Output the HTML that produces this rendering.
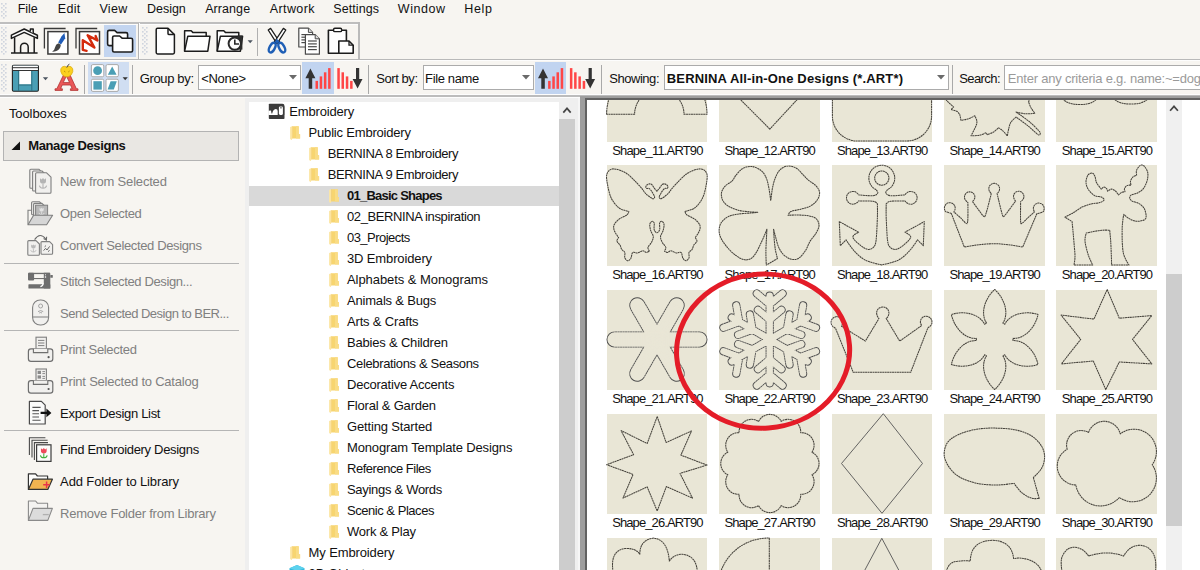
<!DOCTYPE html>
<html lang="en"><head><meta charset="utf-8"><title>BERNINA Embroidery Library</title>
<style>
html,body{margin:0;padding:0;}
body{width:1200px;height:570px;overflow:hidden;position:relative;background:#f7f5f1;font-family:"Liberation Sans",sans-serif;}
.t{position:absolute;white-space:pre;line-height:16px;}
.r{position:absolute;display:block;}
</style></head><body>
<span class="t" style="left:17.7px;top:1.37px;font-size:12.5px;letter-spacing:-0.014px;color:#111;">File</span>
<span class="t" style="left:57.8px;top:1.37px;font-size:12.5px;letter-spacing:0.287px;color:#111;">Edit</span>
<span class="t" style="left:99.4px;top:1.37px;font-size:12.5px;letter-spacing:0.344px;color:#111;">View</span>
<span class="t" style="left:147.1px;top:1.37px;font-size:12.5px;letter-spacing:-0.042px;color:#111;">Design</span>
<span class="t" style="left:205.2px;top:1.37px;font-size:12.5px;letter-spacing:0.071px;color:#111;">Arrange</span>
<span class="t" style="left:269.8px;top:1.37px;font-size:12.5px;letter-spacing:0.389px;color:#111;">Artwork</span>
<span class="t" style="left:333.3px;top:1.37px;font-size:12.5px;letter-spacing:0.076px;color:#111;">Settings</span>
<span class="t" style="left:397.8px;top:1.37px;font-size:12.5px;letter-spacing:0.548px;color:#111;">Window</span>
<span class="t" style="left:464.3px;top:1.37px;font-size:12.5px;letter-spacing:0.664px;color:#111;">Help</span>
<svg class="r" style="left:1px;top:3px;" width="6" height="16" viewBox="0 0 6 16"><g fill="#cfd5de"><rect x="0" y="0" width="1.6" height="1.6"/><rect x="4" y="0" width="1.6" height="1.6"/><rect x="2" y="2" width="1.6" height="1.6"/><rect x="0" y="4" width="1.6" height="1.6"/><rect x="4" y="4" width="1.6" height="1.6"/><rect x="2" y="6" width="1.6" height="1.6"/><rect x="0" y="8" width="1.6" height="1.6"/><rect x="4" y="8" width="1.6" height="1.6"/><rect x="2" y="10" width="1.6" height="1.6"/><rect x="0" y="12" width="1.6" height="1.6"/><rect x="4" y="12" width="1.6" height="1.6"/><rect x="2" y="14" width="1.6" height="1.6"/></g></svg>
<div class="r" style="left:0px;top:22px;width:359.5px;height:1.5px;background:#bebebe;"></div>
<div class="r" style="left:0px;top:23.5px;width:359px;height:1px;background:#fdfdfd;"></div>
<div class="r" style="left:137.5px;top:23px;width:1.5px;height:36px;background:#b4b4b4;"></div>
<div class="r" style="left:139px;top:23px;width:1px;height:36px;background:#fdfdfd;"></div>
<div class="r" style="left:358px;top:22px;width:1.5px;height:37px;background:#bababa;"></div>
<div class="r" style="left:0px;top:58.6px;width:1200px;height:1.6px;background:#b9b9b9;"></div>
<div class="r" style="left:0px;top:60.2px;width:1200px;height:1.2px;background:#fdfdfd;"></div>
<svg class="r" style="left:1px;top:27px;" width="6" height="28" viewBox="0 0 6 28"><g fill="#cfd5de"><rect x="0" y="0" width="1.6" height="1.6"/><rect x="4" y="0" width="1.6" height="1.6"/><rect x="2" y="2" width="1.6" height="1.6"/><rect x="0" y="4" width="1.6" height="1.6"/><rect x="4" y="4" width="1.6" height="1.6"/><rect x="2" y="6" width="1.6" height="1.6"/><rect x="0" y="8" width="1.6" height="1.6"/><rect x="4" y="8" width="1.6" height="1.6"/><rect x="2" y="10" width="1.6" height="1.6"/><rect x="0" y="12" width="1.6" height="1.6"/><rect x="4" y="12" width="1.6" height="1.6"/><rect x="2" y="14" width="1.6" height="1.6"/><rect x="0" y="16" width="1.6" height="1.6"/><rect x="4" y="16" width="1.6" height="1.6"/><rect x="2" y="18" width="1.6" height="1.6"/><rect x="0" y="20" width="1.6" height="1.6"/><rect x="4" y="20" width="1.6" height="1.6"/><rect x="2" y="22" width="1.6" height="1.6"/><rect x="0" y="24" width="1.6" height="1.6"/><rect x="4" y="24" width="1.6" height="1.6"/><rect x="2" y="26" width="1.6" height="1.6"/></g></svg>
<svg class="r" style="left:142px;top:27px;" width="6" height="28" viewBox="0 0 6 28"><g fill="#cfd5de"><rect x="0" y="0" width="1.6" height="1.6"/><rect x="4" y="0" width="1.6" height="1.6"/><rect x="2" y="2" width="1.6" height="1.6"/><rect x="0" y="4" width="1.6" height="1.6"/><rect x="4" y="4" width="1.6" height="1.6"/><rect x="2" y="6" width="1.6" height="1.6"/><rect x="0" y="8" width="1.6" height="1.6"/><rect x="4" y="8" width="1.6" height="1.6"/><rect x="2" y="10" width="1.6" height="1.6"/><rect x="0" y="12" width="1.6" height="1.6"/><rect x="4" y="12" width="1.6" height="1.6"/><rect x="2" y="14" width="1.6" height="1.6"/><rect x="0" y="16" width="1.6" height="1.6"/><rect x="4" y="16" width="1.6" height="1.6"/><rect x="2" y="18" width="1.6" height="1.6"/><rect x="0" y="20" width="1.6" height="1.6"/><rect x="4" y="20" width="1.6" height="1.6"/><rect x="2" y="22" width="1.6" height="1.6"/><rect x="0" y="24" width="1.6" height="1.6"/><rect x="4" y="24" width="1.6" height="1.6"/><rect x="2" y="26" width="1.6" height="1.6"/></g></svg>
<svg class="r" style="left:1px;top:64px;" width="6" height="28" viewBox="0 0 6 28"><g fill="#cfd5de"><rect x="0" y="0" width="1.6" height="1.6"/><rect x="4" y="0" width="1.6" height="1.6"/><rect x="2" y="2" width="1.6" height="1.6"/><rect x="0" y="4" width="1.6" height="1.6"/><rect x="4" y="4" width="1.6" height="1.6"/><rect x="2" y="6" width="1.6" height="1.6"/><rect x="0" y="8" width="1.6" height="1.6"/><rect x="4" y="8" width="1.6" height="1.6"/><rect x="2" y="10" width="1.6" height="1.6"/><rect x="0" y="12" width="1.6" height="1.6"/><rect x="4" y="12" width="1.6" height="1.6"/><rect x="2" y="14" width="1.6" height="1.6"/><rect x="0" y="16" width="1.6" height="1.6"/><rect x="4" y="16" width="1.6" height="1.6"/><rect x="2" y="18" width="1.6" height="1.6"/><rect x="0" y="20" width="1.6" height="1.6"/><rect x="4" y="20" width="1.6" height="1.6"/><rect x="2" y="22" width="1.6" height="1.6"/><rect x="0" y="24" width="1.6" height="1.6"/><rect x="4" y="24" width="1.6" height="1.6"/><rect x="2" y="26" width="1.6" height="1.6"/></g></svg>
<div class="r" style="left:104px;top:25.3px;width:32px;height:31.5px;background:#c3d5f0;"></div>
<div class="r" style="left:256.6px;top:28px;width:1.2px;height:28px;background:#b0b0b0;"></div>
<div class="r" style="left:88px;top:62.2px;width:41px;height:31.7px;background:#d0def2;"></div>
<div class="r" style="left:302px;top:62.2px;width:32px;height:31.7px;background:#c1d4f0;"></div>
<div class="r" style="left:535px;top:62.2px;width:31.4px;height:31.7px;background:#c1d4f0;"></div>
<div class="r" style="left:84px;top:65px;width:1.3px;height:28.6px;background:#a9a9a9;"></div>
<div class="r" style="left:131.7px;top:65px;width:1.3px;height:28.6px;background:#a9a9a9;"></div>
<div class="r" style="left:368px;top:65px;width:1.3px;height:28.6px;background:#a9a9a9;"></div>
<div class="r" style="left:601px;top:65px;width:1.3px;height:28.6px;background:#a9a9a9;"></div>
<div class="r" style="left:952px;top:65px;width:1.3px;height:28.6px;background:#a9a9a9;"></div>
<span class="t" style="left:139.7px;top:70.50px;font-size:13px;letter-spacing:-0.348px;color:#111;">Group by:</span>
<span class="t" style="left:376.3px;top:70.50px;font-size:13px;letter-spacing:-0.442px;color:#111;">Sort by:</span>
<span class="t" style="left:609.3px;top:70.50px;font-size:13px;letter-spacing:-0.469px;color:#111;">Showing:</span>
<span class="t" style="left:959.3px;top:70.50px;font-size:13px;letter-spacing:-0.601px;color:#111;">Search:</span>
<div class="r" style="left:198.3px;top:65.3px;width:101.0px;height:22.6px;background:#fff;border:1px solid #ababab;"></div>
<span class="t" style="left:201.2px;top:70.50px;font-size:13px;letter-spacing:-0.273px;color:#111;">&lt;None&gt;</span>
<svg class="r" style="left:289.3px;top:74.6px;" width="8" height="5" viewBox="0 0 8 5"><path d="M0 0H8L4 4.6Z" fill="#6a6a6a"/></svg>
<div class="r" style="left:423px;top:65.3px;width:109px;height:22.6px;background:#fff;border:1px solid #ababab;"></div>
<span class="t" style="left:425.1px;top:70.50px;font-size:13px;letter-spacing:-0.360px;color:#111;">File name</span>
<svg class="r" style="left:522px;top:74.6px;" width="8" height="5" viewBox="0 0 8 5"><path d="M0 0H8L4 4.6Z" fill="#6a6a6a"/></svg>
<div class="r" style="left:663.5px;top:65.3px;width:283.0px;height:22.6px;background:#fff;border:1px solid #ababab;"></div>
<span class="t" style="left:666.8px;top:70.50px;font-size:13px;font-weight:700;letter-spacing:0.156px;color:#111;">BERNINA All-in-One Designs (*.ART*)</span>
<svg class="r" style="left:936.5px;top:74.6px;" width="8" height="5" viewBox="0 0 8 5"><path d="M0 0H8L4 4.6Z" fill="#6a6a6a"/></svg>
<div class="r" style="left:1003.5px;top:65.3px;width:200px;height:22.6px;background:#fff;border:1px solid #ababab;"></div>
<span class="t" style="left:1007.8px;top:70.50px;font-size:13px;letter-spacing:-0.211px;color:#9a9a9a;">Enter any criteria e.g. name:~=dog</span>
<div class="r" style="left:0px;top:93.9px;width:1200px;height:1.1px;background:#fdfdfd;"></div>
<div class="r" style="left:0px;top:95px;width:1200px;height:1.8px;background:#bcbcbc;"></div>
<div class="r" style="left:0px;top:96.8px;width:580px;height:1.4px;background:#fdfdfd;"></div>
<svg class="r" style="left:0px;top:0px;" width="620" height="100" viewBox="0 0 620 100"><g fill="none" stroke="#1c1c1c" stroke-width="1.5" stroke-linejoin="round"><path d="M14.6 37.2V53M34.2 37.2V53M11 53H37.6" /><path d="M24.2 29L11.4 35.2V38.4L24.2 32.4L37.4 38.4V35.2Z" fill="#fff"/><path d="M30.4 31.6V29H33.2V33.2" fill="#fff"/><path d="M20.6 53V47A3.8 3.8 0 0 1 28.2 47V53" /></g><path d="M44.4 48.4V28.5H65.6" fill="none" stroke="#3a3a3a" stroke-width="1.3"/><rect x="47.9" y="31.6" width="20" height="22.4" fill="#fff" stroke="#3a3a3a" stroke-width="1.5"/><path d="M64.4 33L65.2 38.2L61 44.4L58.2 42.6L61.4 36.6Z" fill="#1f5cb8"/><path d="M58.4 43.2L60.8 44.8Q60.6 49.4 56.4 51Q54 51.8 52.2 51.6Q54.6 50 55 47.4Q55.6 44 58.4 43.2Z" fill="#444"/><path d="M76.0 48.4V28.5H97.19999999999999" fill="none" stroke="#3a3a3a" stroke-width="1.3"/><rect x="79.5" y="31.6" width="20" height="22.4" fill="#fff" stroke="#3a3a3a" stroke-width="1.5"/><path d="M86.6 50.8L82.8 49.8L82.8 40.2L94.4 47.6L87.6 35.2L97.4 40.4L95.6 36" fill="none" stroke="#d42a0c" stroke-width="2.4" stroke-linejoin="round" stroke-linecap="round"/><path d="M109.1 30.4H114.6L117.1 32.6H126.1Q127.6 32.6 127.6 34.1V44.099999999999994Q127.6 45.599999999999994 126.1 45.599999999999994H109.1Q107.6 45.599999999999994 107.6 44.099999999999994V31.9Q107.6 30.4 109.1 30.4Z" fill="#fff" stroke="#1c1c1c" stroke-width="1.6" stroke-linejoin="round"/><path d="M114.1 36H119.6L122.1 38.2H131.1Q132.6 38.2 132.6 39.7V50.5Q132.6 52 131.1 52H114.1Q112.6 52 112.6 50.5V37.5Q112.6 36 114.1 36Z" fill="#fff" stroke="#1c1c1c" stroke-width="1.6" stroke-linejoin="round"/><path d="M157.6 28.2H168L174.4 34.6V52.6Q174.4 54 173 54H157.6Q156.2 54 156.2 52.6V29.6Q156.2 28.2 157.6 28.2Z" fill="#fff" stroke="#1c1c1c" stroke-width="1.5" stroke-linejoin="round"/><path d="M168 28.2V33.4Q168 34.6 169.2 34.6H174.4" fill="none" stroke="#1c1c1c" stroke-width="1.5"/><path d="M184.6 51.2V30.8H191.2L193.0 32.6H206.2V36" fill="#fff" stroke="#1c1c1c" stroke-width="1.5" stroke-linejoin="round"/><path d="M184.6 51.2L187.79999999999998 36.2H210.0L207.79999999999998 51.2Z" fill="#fff" stroke="#1c1c1c" stroke-width="1.5" stroke-linejoin="round"/><path d="M217.2 51.2V30.8H223.79999999999998L225.6 32.6H238.79999999999998V36" fill="#fff" stroke="#1c1c1c" stroke-width="1.5" stroke-linejoin="round"/><path d="M217.2 51.2L220.39999999999998 36.2H242.6L240.39999999999998 51.2Z" fill="#fff" stroke="#1c1c1c" stroke-width="1.5" stroke-linejoin="round"/><path d="M237.6 35.6H242.4V49.6H237.6Z" fill="#2e2e2e"/><circle cx="234.8" cy="43.6" r="6.2" fill="#fff" stroke="#2a2a2a" stroke-width="2"/><path d="M234.8 39.6V44H239" fill="none" stroke="#2a2a2a" stroke-width="1.6"/><path d="M247.6 40.3H252.8L250.2 43.2Z" fill="#4c5560"/><g stroke-linejoin="round"><path d="M268.2 30L270.6 28.4L279.6 42L276.6 43.2Z" fill="#fff" stroke="#1c1c1c" stroke-width="1.3"/><path d="M285.8 30L283.4 28.4L274.4 42L277.4 43.2Z" fill="#fff" stroke="#1c1c1c" stroke-width="1.3"/><ellipse cx="272.2" cy="47.6" rx="2.6" ry="5.2" transform="rotate(28 272.2 47.6)" fill="none" stroke="#1f5fb6" stroke-width="2.4"/><ellipse cx="281.8" cy="47.6" rx="2.6" ry="5.2" transform="rotate(-28 281.8 47.6)" fill="none" stroke="#1f5fb6" stroke-width="2.4"/><path d="M274.6 41.4L277 38.8L279.4 41.4L277 43.6Z" fill="#1f5fb6"/></g><path d="M298.8 28.2H308.40000000000003L312.6 32.4V47.0H298.8Z" fill="#fff" stroke="#4a4a4a" stroke-width="1.2" stroke-linejoin="round"/><path d="M308.40000000000003 28.2V32.4H312.6" fill="#ddd" stroke="#4a4a4a" stroke-width="1"/><path d="M301.40000000000003 34.6H310.0" stroke="#4a4a4a" stroke-width="1.2"/><path d="M301.40000000000003 37.2H310.0" stroke="#4a4a4a" stroke-width="1.2"/><path d="M301.40000000000003 39.9H310.0" stroke="#4a4a4a" stroke-width="1.2"/><path d="M301.40000000000003 42.6H310.0" stroke="#4a4a4a" stroke-width="1.2"/><path d="M305.4 34.6H315.2L319.4 38.800000000000004V54.2H305.4Z" fill="#fff" stroke="#4a4a4a" stroke-width="1.2" stroke-linejoin="round"/><path d="M315.2 34.6V38.800000000000004H319.4" fill="#ddd" stroke="#4a4a4a" stroke-width="1"/><path d="M308.0 41.0H316.79999999999995" stroke="#4a4a4a" stroke-width="1.2"/><path d="M308.0 43.9H316.79999999999995" stroke="#4a4a4a" stroke-width="1.2"/><path d="M308.0 46.7H316.79999999999995" stroke="#4a4a4a" stroke-width="1.2"/><path d="M308.0 49.6H316.79999999999995" stroke="#4a4a4a" stroke-width="1.2"/><path d="M328.4 30.2H346.4V53.2H328.4Z" fill="#fff" stroke="#1c1c1c" stroke-width="1.6" stroke-linejoin="round"/><rect x="333.6" y="28.2" width="8" height="3.4" rx="1.2" fill="#fff" stroke="#1c1c1c" stroke-width="1.4"/><path d="M338.8 41H349L353.2 45.2V53.2H338.8Z" fill="#fff" stroke="#1c1c1c" stroke-width="1.6" stroke-linejoin="round"/><path d="M349 41V45.2H353.2" fill="none" stroke="#1c1c1c" stroke-width="1.3"/><rect x="12.4" y="65.2" width="26" height="26" rx="1.2" fill="#4a9fb5" stroke="#222" stroke-width="1.1"/><rect x="12.9" y="65.7" width="25" height="4.6" fill="#fff"/><path d="M12.4 67.7H38.4M12.4 70.5H38.4" stroke="#333" stroke-width="1"/><rect x="19.2" y="71" width="12" height="13.4" fill="#fff"/><path d="M18.6 71V91M31.8 71V91M18.6 85H31.8" stroke="#2d6f80" stroke-width="1" fill="none"/><path d="M42.8 77.2H48.2L45.5 80.2Z" fill="#4c5560"/><path d="M55 90.4H62.4V88.8H60.6L62.2 85H70.6L72.2 88.8H70.4V90.4H78V88.8H76.4L69.4 73.6H64.2L56.8 88.8H55Z M63.2 82.6L66.4 76L69.6 82.6Z" fill="#ea5757" stroke="#b03434" stroke-width=".8" fill-rule="evenodd" stroke-linejoin="round"/><path d="M66.8 67.2Q64.6 65.6 62.4 66.8Q60.2 68.4 60.8 71.6Q61.8 75.6 65 76.6Q66.8 77 68.6 76.6Q71.8 75.6 72.8 71.6Q73.4 68.4 71.2 66.8Q69 65.6 66.8 67.2Z" fill="#fbd01f" stroke="#d9a70c" stroke-width=".7"/><path d="M66.8 67.4Q67.2 65.4 69.4 64.2" fill="none" stroke="#333" stroke-width="1"/><path d="M64 71L65.4 72M69.6 71L68.2 72" stroke="#b98a0a" stroke-width=".9"/><rect x="91.4" y="64.6" width="12.4" height="12.2" rx="1.4" fill="#fff" stroke="#a9a9a9" stroke-width="1"/><rect x="106" y="64.6" width="12.4" height="12.2" rx="1.4" fill="#fff" stroke="#a9a9a9" stroke-width="1"/><rect x="91.4" y="79.2" width="12.4" height="12.2" rx="1.4" fill="#fff" stroke="#a9a9a9" stroke-width="1"/><rect x="106" y="79.2" width="12.4" height="12.2" rx="1.4" fill="#fff" stroke="#a9a9a9" stroke-width="1"/><circle cx="97.6" cy="70.7" r="4.4" fill="#4a9fb5"/><path d="M112.2 66.4L116.6 74.8H107.8Z" fill="#4a9fb5"/><rect x="93.4" y="81.2" width="8.4" height="8.4" fill="#4a9fb5"/><path d="M110.6 81.2H116.8L113.8 89.6H107.6Z" fill="#4a9fb5"/><path d="M122.6 77.2H127.8L125.2 80.2Z" fill="#333"/><path d="M308.7 88.8V78.2H305.4L310.4 68.4L315.4 78.2H312.2V88.8Z" fill="#333"/><rect x="315.5" y="80.9" width="2.5" height="7.9" fill="#ff4646"/><rect x="319.7" y="76.4" width="2.5" height="12.4" fill="#ff4646"/><rect x="323.9" y="72.3" width="2.5" height="16.5" fill="#ff4646"/><rect x="328.1" y="68.1" width="2.5" height="20.7" fill="#ff4646"/><rect x="337.3" y="68.1" width="2.5" height="20.7" fill="#ff4646"/><rect x="341.5" y="72.3" width="2.5" height="16.5" fill="#ff4646"/><rect x="345.8" y="76.4" width="2.5" height="12.4" fill="#ff4646"/><rect x="350.1" y="80.9" width="2.5" height="7.9" fill="#ff4646"/><path d="M356 68.1V79H352.6L357.6 88.6L362.5 79H359.2V68.1Z" fill="#333"/><path d="M541.3000000000001 88.8V78.2H538.0L543.0 68.4L548.0 78.2H544.8000000000001V88.8Z" fill="#333"/><rect x="548.1" y="80.9" width="2.5" height="7.9" fill="#ff4646"/><rect x="552.3000000000001" y="76.4" width="2.5" height="12.4" fill="#ff4646"/><rect x="556.5" y="72.3" width="2.5" height="16.5" fill="#ff4646"/><rect x="560.7" y="68.1" width="2.5" height="20.7" fill="#ff4646"/><rect x="569.9" y="68.1" width="2.5" height="20.7" fill="#ff4646"/><rect x="574.1" y="72.3" width="2.5" height="16.5" fill="#ff4646"/><rect x="578.4" y="76.4" width="2.5" height="12.4" fill="#ff4646"/><rect x="582.7" y="80.9" width="2.5" height="7.9" fill="#ff4646"/><path d="M588.6 68.1V79H585.2L590.2 88.6L595.1 79H591.8000000000001V68.1Z" fill="#333"/></svg>
<span class="t" style="left:8.9px;top:105.80px;font-size:13px;letter-spacing:-0.080px;color:#111;">Toolboxes</span>
<div class="r" style="left:3.2px;top:130.8px;width:234px;height:27.8px;background:#e9e7e3;border:1px solid #b3b3b3;"></div>
<svg class="r" style="left:11px;top:140.5px;" width="10" height="10" viewBox="0 0 10 10"><path d="M9 0.5V9H0.5Z" fill="#111"/></svg>
<span class="t" style="left:28.3px;top:137.70px;font-size:13px;font-weight:700;letter-spacing:-0.399px;color:#111;">Manage Designs</span>
<span class="t" style="left:60.1px;top:174.20px;font-size:13px;letter-spacing:-0.189px;color:#808080;">New from Selected</span>
<span class="t" style="left:60.1px;top:206.20px;font-size:13px;letter-spacing:-0.359px;color:#808080;">Open Selected</span>
<span class="t" style="left:60.1px;top:238.20px;font-size:13px;letter-spacing:-0.370px;color:#808080;">Convert Selected Designs</span>
<span class="t" style="left:60.1px;top:274.20px;font-size:13px;letter-spacing:-0.376px;color:#808080;">Stitch Selected Design...</span>
<span class="t" style="left:60.1px;top:306.20px;font-size:13px;letter-spacing:-0.520px;color:#808080;">Send Selected Design to BER...</span>
<span class="t" style="left:60.1px;top:342.20px;font-size:13px;letter-spacing:-0.318px;color:#808080;">Print Selected</span>
<span class="t" style="left:60.1px;top:374.20px;font-size:13px;letter-spacing:-0.217px;color:#808080;">Print Selected to Catalog</span>
<span class="t" style="left:60.1px;top:406.20px;font-size:13px;letter-spacing:-0.300px;color:#111;">Export Design List</span>
<span class="t" style="left:60.1px;top:442.20px;font-size:13px;letter-spacing:-0.311px;color:#111;">Find Embroidery Designs</span>
<span class="t" style="left:60.1px;top:474.20px;font-size:13px;letter-spacing:-0.125px;color:#111;">Add Folder to Library</span>
<span class="t" style="left:60.1px;top:506.20px;font-size:13px;letter-spacing:-0.241px;color:#808080;">Remove Folder from Library</span>
<div class="r" style="left:3.5px;top:262.5px;width:235px;height:1px;background:#b5b5b5;"></div>
<div class="r" style="left:3.5px;top:329.5px;width:235px;height:1px;background:#b5b5b5;"></div>
<div class="r" style="left:3.5px;top:430px;width:235px;height:1px;background:#b5b5b5;"></div>
<svg class="r" style="left:20px;top:160px;" width="40" height="370" viewBox="20 160 40 370"><path d="M30.8 169.2H38.8L42.8 173.2V187.2Q42.8 188.2 41.8 188.2H30.8Q29.8 188.2 29.8 187.2V170.2Q29.8 169.2 30.8 169.2Z" fill="#f1f0ee" stroke="#7f7f7f" stroke-width="1.1" stroke-linejoin="round"/><path d="M33.6 171H42.0L46.0 175V190Q46.0 191 45.0 191H33.6Q32.6 191 32.6 190V172Q32.6 171 33.6 171Z" fill="#f1f0ee" stroke="#7f7f7f" stroke-width="1.1" stroke-linejoin="round"/><path d="M36.6 172.8H46.6L51.0 177.20000000000002V192.20000000000002Q51.0 193.20000000000002 50.0 193.20000000000002H36.6Q35.6 193.20000000000002 35.6 192.20000000000002V173.8Q35.6 172.8 36.6 172.8Z" fill="#f1f0ee" stroke="#7f7f7f" stroke-width="1.1" stroke-linejoin="round"/><g transform="translate(43 183.6) scale(1.0)"><path d="M-3 -5.4L-1.4 -4L0 -5.6L1.4 -4L3 -5.4V-2.4Q3 0 0 0Q-3 0 -3 -2.4Z" fill="#b4b4b4"/><path d="M0 0V4.6M-3.6 2Q-3 4.6 0 4.6Q3 4.6 3.6 2" fill="none" stroke="#b4b4b4" stroke-width="1.1"/></g><path d="M28 224.6V210.2H31.4" fill="none" stroke="#7f7f7f" stroke-width="1.1"/><path d="M32.6 201.8H39.6L42.6 204.8V213.8Q42.6 214.8 41.6 214.8H32.6Q31.6 214.8 31.6 213.8V202.8Q31.6 201.8 32.6 201.8Z" fill="#f1f0ee" stroke="#7f7f7f" stroke-width="1.1" stroke-linejoin="round"/><path d="M34.6 203.4H42.0L45.0 206.4V215.4Q45.0 216.4 44.0 216.4H34.6Q33.6 216.4 33.6 215.4V204.4Q33.6 203.4 34.6 203.4Z" fill="#f1f0ee" stroke="#7f7f7f" stroke-width="1.1" stroke-linejoin="round"/><rect x="35.6" y="205.2" width="12" height="11" fill="#b9b9b9" stroke="#7f7f7f" stroke-width="1"/><g transform="translate(41.6 211.6) scale(0.7)"><path d="M-3 -5.4L-1.4 -4L0 -5.6L1.4 -4L3 -5.4V-2.4Q3 0 0 0Q-3 0 -3 -2.4Z" fill="#e4e4e4"/><path d="M0 0V4.6M-3.6 2Q-3 4.6 0 4.6Q3 4.6 3.6 2" fill="none" stroke="#e4e4e4" stroke-width="1.1"/></g><path d="M28 224.8L33.6 215.2H52.6L46.6 224.8Z" fill="#d6d6d6" stroke="#7f7f7f" stroke-width="1.1" stroke-linejoin="round"/><path d="M28.8 240.6H36.0L39.4 244.0V254.2Q39.4 255.2 38.4 255.2H28.8Q27.8 255.2 27.8 254.2V241.6Q27.8 240.6 28.8 240.6Z" fill="#f1f0ee" stroke="#7f7f7f" stroke-width="1.1" stroke-linejoin="round"/><g transform="translate(33.4 248.6) scale(0.75)"><path d="M-3 -5.4L-1.4 -4L0 -5.6L1.4 -4L3 -5.4V-2.4Q3 0 0 0Q-3 0 -3 -2.4Z" fill="#b9b9b9"/><path d="M0 0V4.6M-3.6 2Q-3 4.6 0 4.6Q3 4.6 3.6 2" fill="none" stroke="#b9b9b9" stroke-width="1.1"/></g><path d="M42 241.6H49.6L52.6 244.6V253.2Q52.6 254.2 51.6 254.2H42Q41 254.2 41 253.2V242.6Q41 241.6 42 241.6Z" fill="#f1f0ee" stroke="#7f7f7f" stroke-width="1.1" stroke-linejoin="round"/><path d="M43.6 250.6L45.6 248.4L47 250L49.6 246.4M44.6 246.8L46 245.6M48 251.6L49.6 250.4" stroke="#666" stroke-width="1" fill="none"/><path d="M34.6 239.6Q40 231.6 45.8 239" fill="none" stroke="#6a6a6a" stroke-width="1.1"/><path d="M43.6 238.6L46.4 240.2L46.6 236.8" fill="none" stroke="#6a6a6a" stroke-width="1.1"/><g fill="#6e6e6e"><rect x="28" y="272.8" width="6.1" height="7.8" rx="1"/><rect x="28.6" y="272.8" width="21.4" height="1.3"/><rect x="33.9" y="278" width="10.4" height="1.1"/><path d="M43.8 272.8H49.4Q50.3 272.8 50.3 273.7V288.6H43.8Z"/><rect x="28.4" y="284.2" width="21.9" height="4.4" rx=".6"/><rect x="50.3" y="275" width="2.5" height="2.7" rx=".5"/></g><circle cx="45.5" cy="274.7" r=".55" fill="#fff"/><circle cx="45.5" cy="276.9" r=".75" fill="#fff"/><path d="M40.4 286.6Q43 286.2 43.2 283.4" fill="none" stroke="#fff" stroke-width="1.1"/><rect x="32.6" y="300" width="16" height="25" rx="7.6" fill="#f1f0ee" stroke="#7f7f7f" stroke-width="1.1"/><path d="M32.6 317H48.6" stroke="#7f7f7f" stroke-width="1"/><circle cx="40.6" cy="306" r="2" fill="none" stroke="#9a9a9a" stroke-width=".9"/><path d="M38 311.6Q40.6 309.6 43.2 311.6M39.2 313Q40.6 312 42 313" fill="none" stroke="#9a9a9a" stroke-width=".9"/><rect x="36" y="337.2" width="10.4" height="15" fill="#f1f0ee" stroke="#7f7f7f" stroke-width="1.1"/><path d="M38 340.4H44.4M38 343.0H44.4M38 345.59999999999997H44.4" stroke="#7f7f7f" stroke-width="1"/><rect x="28.4" y="348.8" width="24.4" height="12.6" rx="2.6" fill="#f1f0ee" stroke="#6f6f6f" stroke-width="1.2"/><path d="M33.4 348.8V352.59999999999997H47.8V348.8" fill="#f1f0ee" stroke="#6f6f6f" stroke-width="1.1"/><circle cx="48.6" cy="357.2" r="1.1" fill="#555"/><rect x="36" y="369" width="10.4" height="15" fill="#f1f0ee" stroke="#7f7f7f" stroke-width="1.1"/><rect x="37.6" y="370.8" width="3.4" height="3.2" fill="#8a8a8a"/><rect x="37.6" y="375.4" width="3.4" height="3.2" fill="#8a8a8a"/><path d="M42.4 371.6H45M42.4 373.6H45M42.4 376.4H45M42.4 378.4H45" stroke="#7f7f7f" stroke-width=".9"/><rect x="28.4" y="380.6" width="24.4" height="12.6" rx="2.6" fill="#f1f0ee" stroke="#6f6f6f" stroke-width="1.2"/><path d="M33.4 380.6V384.4H47.8V380.6" fill="#f1f0ee" stroke="#6f6f6f" stroke-width="1.1"/><circle cx="48.6" cy="389" r="1.1" fill="#555"/><path d="M29.4 401.4H41.4L45.2 405.2V424H29.4Z" fill="#fbfbfa" stroke="#4a4a4a" stroke-width="1.2" stroke-linejoin="round"/><path d="M32.4 407.4H40.6M32.4 410.6H39M32.4 413.8H39M32.4 417H39M32.4 420.2H40.6" stroke="#555" stroke-width="1.1"/><path d="M40.6 411.8H46.4V408.6L51.4 412.9L46.4 417.2V414H40.6Z" fill="#111"/><path d="M29.4 455V437.8H45.4M32 457.6V440.2H47.6M34.4 460V442.6H48" fill="none" stroke="#4a4a4a" stroke-width="1.1"/><rect x="36.6" y="444.8" width="14.4" height="16.6" fill="#fbfbfa" stroke="#3c3c3c" stroke-width="1.2"/><g transform="translate(43.8 453.4) scale(0.95)"><path d="M-3 -5.4L-1.4 -4L0 -5.6L1.4 -4L3 -5.4V-2.4Q3 0 0 0Q-3 0 -3 -2.4Z" fill="#ee4a5a"/><path d="M0 0V4.6M-3.6 2Q-3 4.6 0 4.6Q3 4.6 3.6 2" fill="none" stroke="#3fae3a" stroke-width="1.1"/></g><path d="M28.4 489.2V473.8H35.6L37.4 476H47.6V479" fill="#fdfdfc" stroke="#333" stroke-width="1.2" stroke-linejoin="round"/><path d="M28.4 489.4L33 479.2H52.4L47.8 489.4Z" fill="#f2b450" stroke="#333" stroke-width="1.2" stroke-linejoin="round"/><path d="M46.6 481.4V488M43.2 484.7H50" stroke="#e8344a" stroke-width="1.5"/><path d="M28.4 520.2V501H35.6L37.4 503.2H47.6V508" fill="#f4f3f1" stroke="#8a8a8a" stroke-width="1.1" stroke-linejoin="round"/><path d="M28.4 520.4L33 508.4H52.4L47.8 520.4Z" fill="#dcdcdc" stroke="#8a8a8a" stroke-width="1.1" stroke-linejoin="round"/><path d="M42.8 514.6H48.8" stroke="#b0b0b0" stroke-width="1.3"/></svg>
<div class="r" style="left:245px;top:98.2px;width:335px;height:472px;background:#efefef;"></div>
<div class="r" style="left:249px;top:101.8px;width:310px;height:470px;background:#fff;"></div>
<div class="r" style="left:578px;top:98.2px;width:2px;height:472px;background:#f6f6f6;"></div>
<div class="r" style="left:559px;top:119px;width:16px;height:451px;background:#cdcdcd;"></div>
<svg class="r" style="left:561px;top:105px;" width="12" height="10" viewBox="0 0 12 10"><path d="M2.3 7.6L6 3.4L9.7 7.6" fill="none" stroke="#454545" stroke-width="1.7"/></svg>
<div class="r" style="left:249px;top:186.2px;width:310px;height:19.5px;background:#d9d9d9;"></div>
<span class="t" style="left:289.3px;top:104.40px;font-size:13px;letter-spacing:-0.174px;color:#111;">Embroidery</span>
<svg class="r" style="left:268px;top:103px;" width="18" height="17" viewBox="268 103 18 17"><path d="M269.6 103.8H282.4Q284.5 103.8 284.5 106V118.2Q284.5 119 283.7 119H269.6Q268.8 119 268.8 118.2V104.6Q268.8 103.8 269.6 103.8Z" fill="#3b3b3b"/><path d="M268.4 114.9V110.8L271 110.6L271.5 113.6L272.2 113.4Q273.2 109.4 275.6 109.1Q277.7 109 277.7 111V114.9Z" fill="#fff"/><rect x="278.9" y="106.4" width="4.1" height="8.5" rx="1.3" fill="#fff"/><rect x="280.2" y="107.3" width="1.5" height="1.1" fill="#3b3b3b"/><path d="M283.6 106.4V114.9" stroke="#3b3b3b" stroke-width="1.4"/></svg>
<span class="t" style="left:308.6px;top:125.40px;font-size:13px;letter-spacing:-0.193px;color:#111;">Public Embroidery</span>
<svg class="r" style="left:290.1px;top:125.8px;" width="10.5" height="14.5" viewBox="0 0 10.5 14.5"><path d="M2.4 0.2H8.7V8.3H10.1V12.4H2.4Z" fill="#f7d570"/><path d="M6 0.2H8.7V8.3H10.1V12.4H6Z" fill="#f9dc85"/><path d="M0.1 1L2.4 0.2V12.4L1.7 14.2L0.1 13Z" fill="#fce6a4"/><path d="M2.4 0.2V12.4" stroke="#f0c555" stroke-width=".5"/></svg>
<span class="t" style="left:327.7px;top:146.40px;font-size:13px;letter-spacing:-0.374px;color:#111;">BERNINA 8 Embroidery</span>
<svg class="r" style="left:309.2px;top:146.8px;" width="10.5" height="14.5" viewBox="0 0 10.5 14.5"><path d="M2.4 0.2H8.7V8.3H10.1V12.4H2.4Z" fill="#f7d570"/><path d="M6 0.2H8.7V8.3H10.1V12.4H6Z" fill="#f9dc85"/><path d="M0.1 1L2.4 0.2V12.4L1.7 14.2L0.1 13Z" fill="#fce6a4"/><path d="M2.4 0.2V12.4" stroke="#f0c555" stroke-width=".5"/></svg>
<span class="t" style="left:327.7px;top:167.40px;font-size:13px;letter-spacing:-0.374px;color:#111;">BERNINA 9 Embroidery</span>
<svg class="r" style="left:309.2px;top:167.8px;" width="10.5" height="14.5" viewBox="0 0 10.5 14.5"><path d="M2.4 0.2H8.7V8.3H10.1V12.4H2.4Z" fill="#f7d570"/><path d="M6 0.2H8.7V8.3H10.1V12.4H6Z" fill="#f9dc85"/><path d="M0.1 1L2.4 0.2V12.4L1.7 14.2L0.1 13Z" fill="#fce6a4"/><path d="M2.4 0.2V12.4" stroke="#f0c555" stroke-width=".5"/></svg>
<span class="t" style="left:347.0px;top:188.40px;font-size:13px;font-weight:700;letter-spacing:-0.760px;color:#111;">01_Basic Shapes</span>
<svg class="r" style="left:328.5px;top:188.8px;" width="10.5" height="14.5" viewBox="0 0 10.5 14.5"><path d="M2.4 0.2H8.7V8.3H10.1V12.4H2.4Z" fill="#f7d570"/><path d="M6 0.2H8.7V8.3H10.1V12.4H6Z" fill="#f9dc85"/><path d="M0.1 1L2.4 0.2V12.4L1.7 14.2L0.1 13Z" fill="#fce6a4"/><path d="M2.4 0.2V12.4" stroke="#f0c555" stroke-width=".5"/></svg>
<span class="t" style="left:347.0px;top:209.40px;font-size:13px;letter-spacing:-0.387px;color:#111;">02_BERNINA inspiration</span>
<svg class="r" style="left:328.5px;top:209.8px;" width="10.5" height="14.5" viewBox="0 0 10.5 14.5"><path d="M2.4 0.2H8.7V8.3H10.1V12.4H2.4Z" fill="#f7d570"/><path d="M6 0.2H8.7V8.3H10.1V12.4H6Z" fill="#f9dc85"/><path d="M0.1 1L2.4 0.2V12.4L1.7 14.2L0.1 13Z" fill="#fce6a4"/><path d="M2.4 0.2V12.4" stroke="#f0c555" stroke-width=".5"/></svg>
<span class="t" style="left:347.0px;top:230.40px;font-size:13px;letter-spacing:-0.545px;color:#111;">03_Projects</span>
<svg class="r" style="left:328.5px;top:230.8px;" width="10.5" height="14.5" viewBox="0 0 10.5 14.5"><path d="M2.4 0.2H8.7V8.3H10.1V12.4H2.4Z" fill="#f7d570"/><path d="M6 0.2H8.7V8.3H10.1V12.4H6Z" fill="#f9dc85"/><path d="M0.1 1L2.4 0.2V12.4L1.7 14.2L0.1 13Z" fill="#fce6a4"/><path d="M2.4 0.2V12.4" stroke="#f0c555" stroke-width=".5"/></svg>
<span class="t" style="left:347.0px;top:251.40px;font-size:13px;letter-spacing:-0.133px;color:#111;">3D Embroidery</span>
<svg class="r" style="left:328.5px;top:251.8px;" width="10.5" height="14.5" viewBox="0 0 10.5 14.5"><path d="M2.4 0.2H8.7V8.3H10.1V12.4H2.4Z" fill="#f7d570"/><path d="M6 0.2H8.7V8.3H10.1V12.4H6Z" fill="#f9dc85"/><path d="M0.1 1L2.4 0.2V12.4L1.7 14.2L0.1 13Z" fill="#fce6a4"/><path d="M2.4 0.2V12.4" stroke="#f0c555" stroke-width=".5"/></svg>
<span class="t" style="left:347.0px;top:272.40px;font-size:13px;letter-spacing:-0.063px;color:#111;">Alphabets &amp; Monograms</span>
<svg class="r" style="left:328.5px;top:272.8px;" width="10.5" height="14.5" viewBox="0 0 10.5 14.5"><path d="M2.4 0.2H8.7V8.3H10.1V12.4H2.4Z" fill="#f7d570"/><path d="M6 0.2H8.7V8.3H10.1V12.4H6Z" fill="#f9dc85"/><path d="M0.1 1L2.4 0.2V12.4L1.7 14.2L0.1 13Z" fill="#fce6a4"/><path d="M2.4 0.2V12.4" stroke="#f0c555" stroke-width=".5"/></svg>
<span class="t" style="left:347.0px;top:293.40px;font-size:13px;letter-spacing:-0.190px;color:#111;">Animals &amp; Bugs</span>
<svg class="r" style="left:328.5px;top:293.8px;" width="10.5" height="14.5" viewBox="0 0 10.5 14.5"><path d="M2.4 0.2H8.7V8.3H10.1V12.4H2.4Z" fill="#f7d570"/><path d="M6 0.2H8.7V8.3H10.1V12.4H6Z" fill="#f9dc85"/><path d="M0.1 1L2.4 0.2V12.4L1.7 14.2L0.1 13Z" fill="#fce6a4"/><path d="M2.4 0.2V12.4" stroke="#f0c555" stroke-width=".5"/></svg>
<span class="t" style="left:347.0px;top:314.40px;font-size:13px;letter-spacing:-0.173px;color:#111;">Arts &amp; Crafts</span>
<svg class="r" style="left:328.5px;top:314.8px;" width="10.5" height="14.5" viewBox="0 0 10.5 14.5"><path d="M2.4 0.2H8.7V8.3H10.1V12.4H2.4Z" fill="#f7d570"/><path d="M6 0.2H8.7V8.3H10.1V12.4H6Z" fill="#f9dc85"/><path d="M0.1 1L2.4 0.2V12.4L1.7 14.2L0.1 13Z" fill="#fce6a4"/><path d="M2.4 0.2V12.4" stroke="#f0c555" stroke-width=".5"/></svg>
<span class="t" style="left:347.0px;top:335.40px;font-size:13px;letter-spacing:-0.191px;color:#111;">Babies &amp; Children</span>
<svg class="r" style="left:328.5px;top:335.8px;" width="10.5" height="14.5" viewBox="0 0 10.5 14.5"><path d="M2.4 0.2H8.7V8.3H10.1V12.4H2.4Z" fill="#f7d570"/><path d="M6 0.2H8.7V8.3H10.1V12.4H6Z" fill="#f9dc85"/><path d="M0.1 1L2.4 0.2V12.4L1.7 14.2L0.1 13Z" fill="#fce6a4"/><path d="M2.4 0.2V12.4" stroke="#f0c555" stroke-width=".5"/></svg>
<span class="t" style="left:347.0px;top:356.40px;font-size:13px;letter-spacing:-0.351px;color:#111;">Celebrations &amp; Seasons</span>
<svg class="r" style="left:328.5px;top:356.8px;" width="10.5" height="14.5" viewBox="0 0 10.5 14.5"><path d="M2.4 0.2H8.7V8.3H10.1V12.4H2.4Z" fill="#f7d570"/><path d="M6 0.2H8.7V8.3H10.1V12.4H6Z" fill="#f9dc85"/><path d="M0.1 1L2.4 0.2V12.4L1.7 14.2L0.1 13Z" fill="#fce6a4"/><path d="M2.4 0.2V12.4" stroke="#f0c555" stroke-width=".5"/></svg>
<span class="t" style="left:347.0px;top:377.40px;font-size:13px;letter-spacing:-0.222px;color:#111;">Decorative Accents</span>
<svg class="r" style="left:328.5px;top:377.8px;" width="10.5" height="14.5" viewBox="0 0 10.5 14.5"><path d="M2.4 0.2H8.7V8.3H10.1V12.4H2.4Z" fill="#f7d570"/><path d="M6 0.2H8.7V8.3H10.1V12.4H6Z" fill="#f9dc85"/><path d="M0.1 1L2.4 0.2V12.4L1.7 14.2L0.1 13Z" fill="#fce6a4"/><path d="M2.4 0.2V12.4" stroke="#f0c555" stroke-width=".5"/></svg>
<span class="t" style="left:347.0px;top:398.40px;font-size:13px;letter-spacing:-0.190px;color:#111;">Floral &amp; Garden</span>
<svg class="r" style="left:328.5px;top:398.8px;" width="10.5" height="14.5" viewBox="0 0 10.5 14.5"><path d="M2.4 0.2H8.7V8.3H10.1V12.4H2.4Z" fill="#f7d570"/><path d="M6 0.2H8.7V8.3H10.1V12.4H6Z" fill="#f9dc85"/><path d="M0.1 1L2.4 0.2V12.4L1.7 14.2L0.1 13Z" fill="#fce6a4"/><path d="M2.4 0.2V12.4" stroke="#f0c555" stroke-width=".5"/></svg>
<span class="t" style="left:347.0px;top:419.40px;font-size:13px;letter-spacing:-0.160px;color:#111;">Getting Started</span>
<svg class="r" style="left:328.5px;top:419.8px;" width="10.5" height="14.5" viewBox="0 0 10.5 14.5"><path d="M2.4 0.2H8.7V8.3H10.1V12.4H2.4Z" fill="#f7d570"/><path d="M6 0.2H8.7V8.3H10.1V12.4H6Z" fill="#f9dc85"/><path d="M0.1 1L2.4 0.2V12.4L1.7 14.2L0.1 13Z" fill="#fce6a4"/><path d="M2.4 0.2V12.4" stroke="#f0c555" stroke-width=".5"/></svg>
<span class="t" style="left:347.0px;top:440.40px;font-size:13px;letter-spacing:-0.144px;color:#111;">Monogram Template Designs</span>
<svg class="r" style="left:328.5px;top:440.8px;" width="10.5" height="14.5" viewBox="0 0 10.5 14.5"><path d="M2.4 0.2H8.7V8.3H10.1V12.4H2.4Z" fill="#f7d570"/><path d="M6 0.2H8.7V8.3H10.1V12.4H6Z" fill="#f9dc85"/><path d="M0.1 1L2.4 0.2V12.4L1.7 14.2L0.1 13Z" fill="#fce6a4"/><path d="M2.4 0.2V12.4" stroke="#f0c555" stroke-width=".5"/></svg>
<span class="t" style="left:347.0px;top:461.40px;font-size:13px;letter-spacing:-0.481px;color:#111;">Reference Files</span>
<svg class="r" style="left:328.5px;top:461.8px;" width="10.5" height="14.5" viewBox="0 0 10.5 14.5"><path d="M2.4 0.2H8.7V8.3H10.1V12.4H2.4Z" fill="#f7d570"/><path d="M6 0.2H8.7V8.3H10.1V12.4H6Z" fill="#f9dc85"/><path d="M0.1 1L2.4 0.2V12.4L1.7 14.2L0.1 13Z" fill="#fce6a4"/><path d="M2.4 0.2V12.4" stroke="#f0c555" stroke-width=".5"/></svg>
<span class="t" style="left:347.0px;top:482.40px;font-size:13px;letter-spacing:-0.298px;color:#111;">Sayings &amp; Words</span>
<svg class="r" style="left:328.5px;top:482.8px;" width="10.5" height="14.5" viewBox="0 0 10.5 14.5"><path d="M2.4 0.2H8.7V8.3H10.1V12.4H2.4Z" fill="#f7d570"/><path d="M6 0.2H8.7V8.3H10.1V12.4H6Z" fill="#f9dc85"/><path d="M0.1 1L2.4 0.2V12.4L1.7 14.2L0.1 13Z" fill="#fce6a4"/><path d="M2.4 0.2V12.4" stroke="#f0c555" stroke-width=".5"/></svg>
<span class="t" style="left:347.0px;top:503.40px;font-size:13px;letter-spacing:-0.467px;color:#111;">Scenic &amp; Places</span>
<svg class="r" style="left:328.5px;top:503.8px;" width="10.5" height="14.5" viewBox="0 0 10.5 14.5"><path d="M2.4 0.2H8.7V8.3H10.1V12.4H2.4Z" fill="#f7d570"/><path d="M6 0.2H8.7V8.3H10.1V12.4H6Z" fill="#f9dc85"/><path d="M0.1 1L2.4 0.2V12.4L1.7 14.2L0.1 13Z" fill="#fce6a4"/><path d="M2.4 0.2V12.4" stroke="#f0c555" stroke-width=".5"/></svg>
<span class="t" style="left:347.0px;top:524.40px;font-size:13px;letter-spacing:-0.238px;color:#111;">Work &amp; Play</span>
<svg class="r" style="left:328.5px;top:524.8px;" width="10.5" height="14.5" viewBox="0 0 10.5 14.5"><path d="M2.4 0.2H8.7V8.3H10.1V12.4H2.4Z" fill="#f7d570"/><path d="M6 0.2H8.7V8.3H10.1V12.4H6Z" fill="#f9dc85"/><path d="M0.1 1L2.4 0.2V12.4L1.7 14.2L0.1 13Z" fill="#fce6a4"/><path d="M2.4 0.2V12.4" stroke="#f0c555" stroke-width=".5"/></svg>
<span class="t" style="left:308.6px;top:545.40px;font-size:13px;letter-spacing:-0.126px;color:#111;">My Embroidery</span>
<svg class="r" style="left:290.1px;top:545.8px;" width="10.5" height="14.5" viewBox="0 0 10.5 14.5"><path d="M2.4 0.2H8.7V8.3H10.1V12.4H2.4Z" fill="#f7d570"/><path d="M6 0.2H8.7V8.3H10.1V12.4H6Z" fill="#f9dc85"/><path d="M0.1 1L2.4 0.2V12.4L1.7 14.2L0.1 13Z" fill="#fce6a4"/><path d="M2.4 0.2V12.4" stroke="#f0c555" stroke-width=".5"/></svg>
<span class="t" style="left:308.6px;top:566.40px;font-size:13px;letter-spacing:-0.156px;color:#111;">3D Objects</span>
<svg class="r" style="left:288.5px;top:565.3px;" width="16" height="6" viewBox="0 0 16 6"><path d="M8 0L15.5 3.2V6H0.5V3.2Z" fill="#35b8dc"/><path d="M8 0L15.5 3.2L8 6L0.5 3.2Z" fill="#5dd2ee"/></svg>
<div class="r" style="left:580px;top:96.2px;width:5px;height:474px;background:#9e9e9e;"></div>
<div class="r" style="left:580px;top:96.2px;width:620px;height:2px;background:#9e9e9e;"></div>
<div class="r" style="left:585px;top:98.1px;width:615px;height:1.9px;background:#626262;"></div>
<div class="r" style="left:585px;top:98.1px;width:2.1px;height:472px;background:#626262;"></div>
<div class="r" style="left:587.1px;top:100px;width:579px;height:470px;background:#fff;"></div>
<div class="r" style="left:1166px;top:100.2px;width:16px;height:470px;background:#f0f0f0;"></div>
<div class="r" style="left:1182px;top:100.2px;width:18px;height:470px;background:#fff;"></div>
<div class="r" style="left:1166px;top:274px;width:16px;height:251.5px;background:#cdcdcd;"></div>
<svg class="r" style="left:1167.7px;top:103px;" width="12" height="10" viewBox="0 0 12 10"><path d="M2.1 7.8L6 3.4L9.9 7.8" fill="none" stroke="#454545" stroke-width="1.7"/></svg>
<div class="r" style="left:606.8px;top:100.2px;width:100.6px;height:41.499999999999986px;background:#e9e6d6;"></div>
<span class="t" style="left:612.2px;top:143.10px;font-size:13px;letter-spacing:-0.835px;color:#111;">Shape_11.ART90</span>
<div class="r" style="left:719.1px;top:100.2px;width:100.6px;height:41.499999999999986px;background:#e9e6d6;"></div>
<span class="t" style="left:724.5px;top:143.10px;font-size:13px;letter-spacing:-0.909px;color:#111;">Shape_12.ART90</span>
<div class="r" style="left:831.6px;top:100.2px;width:100.6px;height:41.499999999999986px;background:#e9e6d6;"></div>
<span class="t" style="left:837.0px;top:143.10px;font-size:13px;letter-spacing:-0.909px;color:#111;">Shape_13.ART90</span>
<div class="r" style="left:944.1px;top:100.2px;width:100.6px;height:41.499999999999986px;background:#e9e6d6;"></div>
<span class="t" style="left:949.5px;top:143.10px;font-size:13px;letter-spacing:-0.909px;color:#111;">Shape_14.ART90</span>
<div class="r" style="left:1056.4px;top:100.2px;width:100.6px;height:41.499999999999986px;background:#e9e6d6;"></div>
<span class="t" style="left:1061.8px;top:143.10px;font-size:13px;letter-spacing:-0.909px;color:#111;">Shape_15.ART90</span>
<div class="r" style="left:606.8px;top:165.4px;width:100.6px;height:100.29999999999998px;background:#e9e6d6;"></div>
<span class="t" style="left:612.2px;top:267.10px;font-size:13px;letter-spacing:-0.909px;color:#111;">Shape_16.ART90</span>
<div class="r" style="left:719.1px;top:165.4px;width:100.6px;height:100.29999999999998px;background:#e9e6d6;"></div>
<span class="t" style="left:724.5px;top:267.10px;font-size:13px;letter-spacing:-0.909px;color:#111;">Shape_17.ART90</span>
<div class="r" style="left:831.6px;top:165.4px;width:100.6px;height:100.29999999999998px;background:#e9e6d6;"></div>
<span class="t" style="left:837.0px;top:267.10px;font-size:13px;letter-spacing:-0.909px;color:#111;">Shape_18.ART90</span>
<div class="r" style="left:944.1px;top:165.4px;width:100.6px;height:100.29999999999998px;background:#e9e6d6;"></div>
<span class="t" style="left:949.5px;top:267.10px;font-size:13px;letter-spacing:-0.909px;color:#111;">Shape_19.ART90</span>
<div class="r" style="left:1056.4px;top:165.4px;width:100.6px;height:100.29999999999998px;background:#e9e6d6;"></div>
<span class="t" style="left:1061.8px;top:267.10px;font-size:13px;letter-spacing:-0.909px;color:#111;">Shape_20.ART90</span>
<div class="r" style="left:606.8px;top:289.6px;width:100.6px;height:100.30000000000001px;background:#e9e6d6;"></div>
<span class="t" style="left:612.2px;top:391.30px;font-size:13px;letter-spacing:-0.909px;color:#111;">Shape_21.ART90</span>
<div class="r" style="left:719.1px;top:289.6px;width:100.6px;height:100.30000000000001px;background:#e9e6d6;"></div>
<span class="t" style="left:724.5px;top:391.30px;font-size:13px;letter-spacing:-0.909px;color:#111;">Shape_22.ART90</span>
<div class="r" style="left:831.6px;top:289.6px;width:100.6px;height:100.30000000000001px;background:#e9e6d6;"></div>
<span class="t" style="left:837.0px;top:391.30px;font-size:13px;letter-spacing:-0.909px;color:#111;">Shape_23.ART90</span>
<div class="r" style="left:944.1px;top:289.6px;width:100.6px;height:100.30000000000001px;background:#e9e6d6;"></div>
<span class="t" style="left:949.5px;top:391.30px;font-size:13px;letter-spacing:-0.909px;color:#111;">Shape_24.ART90</span>
<div class="r" style="left:1056.4px;top:289.6px;width:100.6px;height:100.30000000000001px;background:#e9e6d6;"></div>
<span class="t" style="left:1061.8px;top:391.30px;font-size:13px;letter-spacing:-0.909px;color:#111;">Shape_25.ART90</span>
<div class="r" style="left:606.8px;top:413.7px;width:100.6px;height:100.30000000000001px;background:#e9e6d6;"></div>
<span class="t" style="left:612.2px;top:515.40px;font-size:13px;letter-spacing:-0.909px;color:#111;">Shape_26.ART90</span>
<div class="r" style="left:719.1px;top:413.7px;width:100.6px;height:100.30000000000001px;background:#e9e6d6;"></div>
<span class="t" style="left:724.5px;top:515.40px;font-size:13px;letter-spacing:-0.909px;color:#111;">Shape_27.ART90</span>
<div class="r" style="left:831.6px;top:413.7px;width:100.6px;height:100.30000000000001px;background:#e9e6d6;"></div>
<span class="t" style="left:837.0px;top:515.40px;font-size:13px;letter-spacing:-0.909px;color:#111;">Shape_28.ART90</span>
<div class="r" style="left:944.1px;top:413.7px;width:100.6px;height:100.30000000000001px;background:#e9e6d6;"></div>
<span class="t" style="left:949.5px;top:515.40px;font-size:13px;letter-spacing:-0.909px;color:#111;">Shape_29.ART90</span>
<div class="r" style="left:1056.4px;top:413.7px;width:100.6px;height:100.30000000000001px;background:#e9e6d6;"></div>
<span class="t" style="left:1061.8px;top:515.40px;font-size:13px;letter-spacing:-0.909px;color:#111;">Shape_30.ART90</span>
<div class="r" style="left:606.8px;top:537.8px;width:100.6px;height:32.200000000000045px;background:#e9e6d6;"></div>
<div class="r" style="left:719.1px;top:537.8px;width:100.6px;height:32.200000000000045px;background:#e9e6d6;"></div>
<div class="r" style="left:831.6px;top:537.8px;width:100.6px;height:32.200000000000045px;background:#e9e6d6;"></div>
<div class="r" style="left:944.1px;top:537.8px;width:100.6px;height:32.200000000000045px;background:#e9e6d6;"></div>
<div class="r" style="left:1056.4px;top:537.8px;width:100.6px;height:32.200000000000045px;background:#e9e6d6;"></div>
<svg class="r" style="left:587.2px;top:100.2px;" width="579" height="469.8" viewBox="587.2 100.2 579 469.8"><path d="M657.2 191.5C656.7 190.9 655.4 189.4 654.5 188.3C653.6 187.2 652.8 185.5 652.0 184.8C651.1 184.1 650.3 184.0 649.5 184.1C648.7 184.1 647.7 184.7 647.1 185.2C646.5 185.7 646.0 186.7 646.0 187.3C646.0 187.9 646.6 188.5 647.1 188.7C647.5 188.9 648.2 188.2 648.8 188.5C649.4 188.7 650.1 189.2 650.8 190.1C651.6 191.0 652.7 192.7 653.3 193.9C654.0 195.1 654.7 196.4 654.8 197.2C654.9 198.0 654.3 198.5 653.9 198.7C653.5 198.9 653.7 199.5 652.4 198.7C651.0 197.9 648.0 195.9 646.0 193.9C644.0 191.9 643.6 190.2 640.4 186.8C637.3 183.5 631.6 176.9 627.1 173.9C622.6 170.9 616.9 169.1 613.6 169.1C610.3 169.1 608.2 171.2 607.2 173.9C606.2 176.6 607.0 181.0 607.8 185.1C608.5 189.2 609.7 194.7 611.6 198.6C613.6 202.5 616.5 206.1 619.4 208.2C622.3 210.4 627.4 211.1 629.0 211.7C628.7 212.3 628.8 213.7 627.2 215.0C625.6 216.3 621.4 217.8 619.3 219.4C617.2 221.0 615.4 223.0 614.5 224.6C613.6 226.2 613.8 227.5 614.0 229.0C614.2 230.4 615.0 231.9 615.8 233.4C616.6 234.8 618.3 237.0 618.8 237.8C618.5 238.4 616.9 240.0 617.1 241.3C617.3 242.5 619.4 243.9 620.2 245.3C621.0 246.7 621.1 248.3 621.9 249.6C622.7 250.8 624.5 251.3 625.0 252.7C625.5 254.1 624.5 256.6 625.0 258.0C625.5 259.3 627.1 260.9 628.1 261.0C629.1 261.0 630.3 259.7 631.1 258.4C631.9 257.0 631.8 253.5 632.9 252.7C634.0 251.8 636.0 253.5 637.7 253.2C639.4 252.9 641.5 251.1 643.0 251.0C644.5 250.9 645.4 252.6 646.5 252.7C647.6 252.7 649.0 251.6 649.5 251.4C649.3 250.7 647.8 248.9 648.2 247.5C648.5 246.0 650.8 244.3 651.7 242.6C652.6 240.8 653.6 238.8 653.5 236.9C653.4 234.9 651.5 232.8 650.9 230.8C650.3 228.7 649.8 226.1 650.0 224.6C650.2 223.0 651.4 221.8 652.2 221.6C652.9 221.4 654.0 221.9 654.4 223.3C654.7 224.7 653.9 228.3 654.4 229.9C654.8 231.5 656.2 233.0 657.1 233.0C658.0 233.0 659.4 231.5 659.8 229.9C660.3 228.3 659.5 224.7 659.8 223.3C660.2 221.9 661.3 221.4 662.0 221.6C662.8 221.8 664.0 223.0 664.2 224.6C664.4 226.1 663.9 228.7 663.3 230.8C662.7 232.8 660.8 234.9 660.7 236.9C660.6 238.8 661.6 240.8 662.5 242.6C663.4 244.3 665.6 246.0 666.0 247.5C666.4 248.9 664.9 250.7 664.7 251.4C665.2 251.6 666.6 252.7 667.7 252.7C668.8 252.6 669.7 250.9 671.2 251.0C672.7 251.1 674.8 252.9 676.5 253.2C678.2 253.5 680.2 251.8 681.3 252.7C682.4 253.5 682.3 257.0 683.1 258.4C683.9 259.7 685.1 261.0 686.1 261.0C687.1 260.9 688.7 259.3 689.2 258.0C689.7 256.6 688.7 254.1 689.2 252.7C689.7 251.3 691.5 250.8 692.3 249.6C693.1 248.3 693.2 246.7 694.0 245.3C694.8 243.9 696.9 242.5 697.1 241.3C697.3 240.0 695.7 238.4 695.4 237.8C695.9 237.0 697.6 234.8 698.4 233.4C699.2 231.9 700.0 230.4 700.2 229.0C700.4 227.5 700.6 226.2 699.7 224.6C698.8 223.0 697.0 221.0 694.9 219.4C692.8 217.8 688.6 216.3 687.0 215.0C685.4 213.7 685.5 212.3 685.2 211.7C686.8 211.1 691.9 210.4 694.8 208.2C697.7 206.1 700.6 202.5 702.5 198.6C704.5 194.7 705.7 189.2 706.4 185.1C707.1 181.0 707.9 176.6 707.0 173.9C706.0 171.2 703.9 169.1 700.6 169.1C697.3 169.1 691.6 170.9 687.1 173.9C682.6 176.9 676.9 183.5 673.8 186.8C670.6 190.2 670.2 191.9 668.2 193.9C666.2 195.9 663.1 197.9 661.8 198.7C660.5 199.5 660.7 198.9 660.3 198.7C659.9 198.5 659.3 198.0 659.4 197.2C659.5 196.4 660.2 195.1 660.9 193.9C661.5 192.7 662.6 191.0 663.4 190.1C664.1 189.2 664.8 188.7 665.4 188.5C666.0 188.2 666.6 188.9 667.1 188.7C667.6 188.5 668.2 187.9 668.2 187.3C668.2 186.7 667.7 185.7 667.1 185.2C666.5 184.7 665.5 184.1 664.7 184.1C663.9 184.0 663.0 184.1 662.2 184.8C661.4 185.5 660.6 187.2 659.7 188.3C658.8 189.4 657.5 190.9 657.0 191.5Z" fill="none" stroke="#46433c" stroke-width="1.05" stroke-dasharray="2 0.45" stroke-linejoin="round" /><path d="M770.9 200.5C770.6 198.6 769.9 192.5 769.2 188.9C768.5 185.4 768.0 182.2 766.9 179.3C765.7 176.4 764.6 173.7 762.2 171.6C759.9 169.5 755.8 167.2 752.6 166.8C749.4 166.3 745.7 167.2 742.9 168.7C740.2 170.1 738.0 173.3 736.2 175.4C734.4 177.5 734.1 179.5 732.3 181.2C730.6 183.0 727.3 184.1 725.6 186.1C723.8 188.0 722.2 190.4 721.7 192.8C721.3 195.2 721.8 198.3 722.9 200.5C724.0 202.8 725.8 204.6 728.5 206.3C731.2 208.0 735.4 209.6 739.1 210.6C742.8 211.5 747.5 211.8 750.7 212.1C753.8 212.4 756.8 212.4 758.0 212.5C756.8 212.6 754.1 212.9 750.7 213.3C747.2 213.6 741.0 213.7 737.2 214.4C733.3 215.1 730.2 215.8 727.5 217.3C724.8 218.9 722.3 221.2 720.9 223.7C719.6 226.2 719.1 229.5 719.4 232.4C719.7 235.3 721.0 238.2 722.7 241.1C724.4 243.9 727.0 247.2 729.4 249.7C731.9 252.3 734.6 254.8 737.2 256.5C739.7 258.2 742.5 259.6 744.9 260.0C747.3 260.3 749.7 259.6 751.6 258.4C753.6 257.2 754.8 255.2 756.5 252.6C758.1 250.1 759.9 245.9 761.3 243.0C762.7 240.0 764.0 237.1 764.9 234.9C765.9 232.6 766.7 230.4 767.1 229.5C767.0 231.4 766.7 237.2 766.5 241.1C766.3 244.9 766.1 248.6 766.1 252.6C766.1 256.7 766.4 263.1 766.5 265.2L777.7 258.8C777.3 257.1 775.9 252.4 775.4 248.8C774.8 245.2 774.5 240.4 774.2 237.2C774.0 234.0 773.9 230.8 773.8 229.5C774.1 230.8 775.0 234.3 775.8 237.2C776.6 240.1 777.4 243.9 778.6 246.8C779.9 249.7 781.4 252.5 783.5 254.6C785.6 256.7 788.6 258.7 791.2 259.4C793.8 260.0 796.5 259.9 798.9 258.4C801.3 257.0 803.7 253.6 805.7 250.7C807.6 247.8 808.7 243.9 810.5 241.1C812.3 238.2 814.8 235.9 816.3 233.3C817.7 230.8 819.2 228.0 819.2 225.6C819.2 223.2 818.1 220.5 816.3 218.9C814.5 217.3 811.8 216.6 808.6 216.0C805.3 215.4 800.4 215.3 797.0 215.2C793.6 215.1 789.7 215.5 788.3 215.6C788.8 214.9 789.1 212.7 791.2 211.7C793.3 210.7 797.6 210.3 800.8 209.4C804.1 208.5 807.8 207.8 810.5 206.3C813.2 204.8 815.7 202.8 817.2 200.5C818.8 198.3 819.9 195.2 819.8 192.8C819.6 190.4 818.1 188.1 816.3 186.1C814.4 184.0 810.8 182.2 808.6 180.3C806.3 178.3 804.7 176.4 802.8 174.5C800.8 172.5 799.4 170.1 797.0 168.7C794.6 167.3 791.0 166.0 788.3 166.2C785.6 166.3 782.7 167.8 780.6 169.6C778.5 171.5 777.0 174.5 775.8 177.4C774.5 180.3 773.6 183.8 772.9 187.0C772.2 190.2 771.8 194.4 771.5 196.7C771.2 198.9 771.0 199.9 770.9 200.5Z" fill="none" stroke="#46433c" stroke-width="1.05" stroke-dasharray="2 0.45" stroke-linejoin="round" /><path d="M882.0 265.2C879.3 264.4 870.3 262.8 865.6 260.4C860.9 257.9 857.2 254.1 854.0 250.7C850.8 247.3 847.6 241.9 846.3 240.1L840.5 245.9L839.5 221.8L858.8 232.4C857.9 233.2 852.9 235.1 853.1 237.2C853.2 239.3 857.4 242.9 859.8 244.9C862.2 247.0 865.3 249.1 867.5 249.5C869.8 250.0 871.9 249.2 873.3 247.8C874.8 246.4 875.5 246.0 876.2 241.1C876.9 236.1 877.3 224.1 877.6 217.9C877.8 211.7 877.6 206.3 877.6 204.0C876.9 203.6 876.4 202.0 873.3 201.5C870.2 201.0 861.4 201.2 859.0 201.1C858.6 201.5 857.5 202.7 856.7 203.2C855.9 203.8 855.0 204.1 854.2 204.3C853.3 204.4 852.3 204.4 851.4 204.2C850.5 203.9 849.6 203.5 849.0 202.9C848.3 202.3 847.7 201.5 847.3 200.7C846.9 199.9 846.7 198.9 846.7 198.0C846.7 197.1 846.9 196.1 847.3 195.3C847.7 194.5 848.3 193.7 849.0 193.1C849.6 192.6 850.5 192.1 851.4 191.9C852.3 191.6 853.3 191.6 854.2 191.7C855.0 191.9 855.9 192.2 856.7 192.8C857.5 193.4 858.6 194.7 859.0 195.1C861.4 195.3 870.2 196.2 873.3 195.9C876.5 195.6 877.4 194.2 877.9 193.2C878.5 192.2 876.7 190.5 876.4 189.9C875.9 189.6 874.3 188.8 873.4 188.0C872.6 187.3 871.8 186.4 871.2 185.4C870.6 184.5 870.0 183.4 869.7 182.3C869.3 181.2 869.1 180.0 869.1 178.9C869.0 177.7 869.1 176.5 869.4 175.4C869.7 174.3 870.1 173.2 870.6 172.2C871.2 171.2 871.9 170.2 872.7 169.4C873.5 168.6 874.4 167.8 875.4 167.2C876.4 166.6 877.5 166.2 878.6 165.9C879.7 165.6 880.9 165.4 882.0 165.4C883.1 165.4 884.3 165.6 885.4 165.9C886.5 166.2 887.6 166.6 888.6 167.2C889.6 167.8 890.5 168.6 891.3 169.4C892.1 170.2 892.8 171.2 893.4 172.2C893.9 173.2 894.3 174.3 894.6 175.4C894.9 176.5 895.0 177.7 894.9 178.9C894.9 180.0 894.7 181.2 894.3 182.3C894.0 183.4 893.4 184.5 892.8 185.4C892.2 186.4 891.4 187.3 890.6 188.0C889.7 188.8 888.1 189.6 887.6 189.9C887.3 190.5 885.5 192.2 886.1 193.2C886.6 194.2 887.5 195.6 890.7 195.9C893.8 196.2 902.6 195.3 905.0 195.1C905.4 194.7 906.5 193.4 907.3 192.8C908.1 192.2 909.0 191.9 909.8 191.7C910.7 191.6 911.7 191.6 912.6 191.9C913.5 192.1 914.4 192.6 915.0 193.1C915.7 193.7 916.3 194.5 916.7 195.3C917.1 196.1 917.3 197.1 917.3 198.0C917.3 198.9 917.1 199.9 916.7 200.7C916.3 201.5 915.7 202.3 915.0 202.9C914.4 203.5 913.5 203.9 912.6 204.2C911.7 204.4 910.7 204.4 909.8 204.3C909.0 204.1 908.1 203.8 907.3 203.2C906.5 202.7 905.4 201.5 905.0 201.1C902.6 201.2 893.8 201.0 890.7 201.5C887.6 202.0 887.1 203.6 886.4 204.0C886.4 206.3 886.2 211.7 886.4 217.9C886.7 224.1 887.1 236.1 887.8 241.1C888.5 246.0 889.2 246.4 890.7 247.8C892.1 249.2 894.2 250.0 896.5 249.5C898.7 249.1 901.8 247.0 904.2 244.9C906.6 242.9 910.8 239.3 910.9 237.2C911.1 235.1 906.1 233.2 905.2 232.4L924.5 221.8L923.5 245.9L917.7 240.1C916.4 241.9 913.2 247.3 910.0 250.7C906.8 254.1 903.1 257.9 898.4 260.4C893.7 262.8 884.7 264.4 882.0 265.2Z" fill="none" stroke="#46433c" stroke-width="1.05" stroke-dasharray="2 0.45" stroke-linejoin="round" /><circle cx="882.0" cy="178.3" r="7.1" fill="none" stroke="#46433c" stroke-width="1.05" stroke-dasharray="2 0.45" stroke-linejoin="round"/><path d="M951.5 213.6C950.6 213.3 947.0 212.5 945.9 211.8C944.7 211.0 944.9 210.1 944.7 209.3C944.5 208.4 944.6 207.4 944.9 206.5C945.2 205.7 945.7 204.8 946.4 204.2C947.0 203.6 948.0 203.2 948.8 203.0C949.7 202.8 950.7 202.8 951.6 203.1C952.4 203.3 953.3 203.9 953.9 204.5C954.5 205.2 955.0 206.1 955.2 206.9C955.5 207.8 955.4 208.8 955.2 209.7C955.0 210.6 954.2 211.7 954.1 212.1C955.1 213.1 958.6 216.0 960.6 217.9C962.6 219.8 964.8 222.7 966.0 223.3C967.2 223.9 967.6 224.8 967.9 221.4C968.3 218.0 968.1 205.9 968.1 202.8C967.8 202.5 966.4 201.3 965.8 200.5C965.2 199.7 964.8 198.8 964.7 197.9C964.6 197.0 964.8 195.9 965.1 195.1C965.5 194.3 966.2 193.4 967.0 192.9C967.7 192.4 968.7 192.1 969.7 192.0C970.6 192.0 971.6 192.2 972.4 192.7C973.2 193.1 974.0 193.9 974.4 194.7C974.9 195.5 975.1 196.5 975.1 197.4C975.1 198.3 974.6 199.4 974.2 200.1C973.8 200.8 972.9 201.4 972.6 201.7C973.6 203.0 976.7 207.3 978.6 209.8C980.4 212.2 982.5 215.6 983.8 216.4C985.0 217.1 984.8 217.8 986.1 214.0C987.4 210.3 990.6 197.1 991.5 193.8C991.2 193.4 990.1 192.5 989.7 191.6C989.3 190.8 989.0 189.8 989.0 188.9C989.0 188.0 989.3 187.0 989.7 186.2C990.2 185.5 990.9 184.7 991.7 184.3C992.5 183.8 993.5 183.5 994.4 183.5C995.3 183.5 996.3 183.8 997.1 184.3C997.9 184.7 998.6 185.5 999.1 186.2C999.5 187.0 999.8 188.0 999.8 188.9C999.8 189.8 999.5 190.8 999.1 191.6C998.6 192.5 997.6 193.4 997.3 193.8C998.1 197.1 1001.1 210.3 1002.3 214.0C1003.5 217.8 1003.1 216.9 1004.2 216.4C1005.3 215.8 1006.9 213.1 1008.9 210.6C1010.8 208.1 1014.6 202.8 1015.8 201.3C1015.6 201.0 1014.9 200.3 1014.6 199.5C1014.2 198.8 1013.7 197.8 1013.7 196.8C1013.7 195.9 1013.9 194.9 1014.4 194.1C1014.8 193.3 1015.6 192.5 1016.4 192.1C1017.2 191.7 1018.2 191.4 1019.1 191.5C1020.0 191.5 1021.1 191.8 1021.8 192.3C1022.6 192.9 1023.3 193.7 1023.6 194.5C1024.0 195.3 1024.2 196.4 1024.1 197.3C1024.0 198.2 1023.5 199.1 1023.0 199.9C1022.4 200.7 1021.2 201.7 1020.8 202.1C1020.8 205.3 1020.6 217.8 1020.8 221.4C1021.1 224.9 1021.1 223.9 1022.4 223.3C1023.6 222.7 1026.1 219.8 1028.2 217.9C1030.2 216.0 1033.6 213.1 1034.7 212.1C1034.6 211.8 1033.9 210.9 1033.8 210.1C1033.6 209.3 1033.5 208.2 1033.7 207.3C1033.9 206.5 1034.4 205.6 1035.0 204.9C1035.7 204.3 1036.5 203.7 1037.4 203.5C1038.2 203.2 1039.3 203.2 1040.1 203.4C1041.0 203.5 1041.9 204.0 1042.6 204.6C1043.2 205.2 1043.8 206.1 1044.1 206.9C1044.4 207.8 1044.4 208.8 1044.3 209.7C1044.1 210.5 1044.3 211.4 1043.1 212.1C1041.9 212.9 1038.0 213.7 1037.0 214.0L1022.9 247.2C1020.5 246.8 1013.2 245.5 1008.5 244.9C1003.7 244.4 999.2 243.9 994.4 243.9C989.6 243.9 984.5 244.4 979.5 244.9C974.5 245.5 967.0 246.8 964.5 247.2L951.5 213.6Z" fill="none" stroke="#46433c" stroke-width="1.05" stroke-dasharray="2 0.45" stroke-linejoin="round" /><path d="M1082.0 207.3C1083.6 206.7 1088.5 204.8 1091.5 204.1C1094.5 203.4 1097.8 203.5 1099.9 202.8C1102.1 202.2 1104.1 201.0 1104.3 200.1C1104.6 199.2 1103.1 198.0 1101.5 197.2C1099.9 196.5 1096.8 197.0 1094.6 195.7C1092.4 194.3 1089.7 191.6 1088.3 189.3C1086.9 187.1 1086.2 184.3 1086.2 182.0C1086.2 179.6 1087.3 176.6 1088.3 175.1C1089.4 173.7 1091.4 173.1 1092.5 173.3C1093.7 173.6 1094.5 175.1 1095.2 176.7C1095.9 178.3 1095.7 180.9 1096.8 183.0C1097.8 185.1 1100.7 188.3 1101.5 189.3C1101.9 189.0 1103.3 187.3 1104.1 187.2C1105.0 187.1 1106.1 188.1 1106.8 188.8C1107.4 189.5 1107.6 191.0 1107.8 191.5C1108.4 191.1 1110.2 189.4 1111.5 189.3C1112.8 189.3 1114.5 190.3 1115.7 191.2C1116.9 192.2 1118.2 194.5 1118.7 195.1C1119.2 194.7 1121.0 193.0 1122.0 192.5C1123.1 192.0 1124.7 192.1 1125.2 192.0C1125.1 191.5 1124.3 189.9 1124.7 188.8C1125.0 187.8 1126.2 186.2 1127.3 185.7C1128.4 185.1 1130.6 185.4 1131.3 185.3C1131.2 184.7 1130.4 182.8 1130.7 181.4C1131.0 180.1 1132.1 178.2 1133.1 177.2C1134.1 176.2 1136.2 175.7 1136.8 175.4C1136.8 174.6 1136.2 172.0 1136.8 170.4C1137.4 168.7 1139.3 166.3 1140.5 165.6C1141.7 164.9 1142.9 165.0 1144.2 166.2C1145.4 167.3 1147.3 170.0 1147.9 172.5C1148.4 174.9 1148.1 178.1 1147.3 180.9C1146.5 183.7 1144.9 187.2 1143.1 189.3C1141.4 191.5 1138.7 192.6 1136.8 193.6C1134.9 194.5 1132.7 194.3 1131.5 195.1C1130.4 195.9 1129.8 197.2 1129.9 198.3C1130.1 199.4 1131.1 200.6 1132.6 201.5C1134.1 202.3 1137.0 202.4 1138.9 203.6C1140.8 204.7 1142.9 206.3 1144.2 208.3C1145.4 210.3 1146.2 213.8 1146.3 215.7C1146.4 217.6 1146.3 218.9 1144.7 219.9C1143.1 220.9 1139.3 221.7 1136.8 221.5C1134.2 221.3 1131.5 220.0 1129.4 218.8C1127.3 217.7 1125.0 215.3 1124.1 214.6C1124.0 215.2 1123.7 215.7 1123.4 217.9C1123.1 220.0 1122.6 223.7 1122.4 227.5C1122.3 231.4 1122.3 236.9 1122.4 241.1C1122.6 245.2 1122.8 249.4 1123.4 252.6C1124.0 255.8 1125.3 258.3 1126.3 260.4C1127.3 262.4 1128.7 264.4 1129.2 265.2L1111.8 265.2C1111.8 263.1 1111.6 256.7 1111.4 252.6C1111.3 248.6 1111.1 244.8 1110.9 241.1C1110.6 237.4 1110.1 232.2 1109.9 230.4C1108.6 230.4 1104.9 230.2 1102.2 230.4C1099.4 230.7 1096.1 231.3 1093.5 231.8C1090.9 232.3 1087.5 233.1 1086.4 233.3C1086.2 234.6 1085.0 237.8 1085.2 241.1C1085.4 244.3 1086.8 249.4 1087.7 252.6C1088.6 255.8 1089.7 258.3 1090.6 260.4C1091.5 262.4 1092.5 264.4 1092.9 265.2L1074.2 265.2C1074.4 263.7 1075.2 260.2 1075.2 256.5C1075.2 252.8 1074.5 247.2 1074.2 243.0C1073.9 238.8 1073.5 234.9 1073.2 231.4C1072.9 227.9 1072.4 223.4 1072.3 221.8L1065.1 217.3C1066.5 216.6 1070.4 214.7 1073.2 213.1C1076.0 211.4 1080.5 208.2 1082.0 207.3Z" fill="none" stroke="#46433c" stroke-width="1.05" stroke-dasharray="2 0.45" stroke-linejoin="round" /><path d="M614.80 339.70L699.60 339.70M637.50 305.58L676.90 373.82M676.90 305.58L637.50 373.82" fill="none" stroke="#505050" stroke-width="16.2" stroke-linecap="round" stroke-linejoin="round"/><path d="M614.80 339.70L699.60 339.70M637.50 305.58L676.90 373.82M676.90 305.58L637.50 373.82" fill="none" stroke="#e9e6d6" stroke-width="14.4" stroke-linecap="round" stroke-linejoin="round"/><path d="M614.80 339.70L699.60 339.70M637.50 305.58L676.90 373.82M676.90 305.58L637.50 373.82" fill="none" stroke="#e9e6d6" stroke-width="17.0" stroke-dasharray="0.5 2" stroke-opacity=".75"/><path d="M769.90 339.70L769.90 295.90M769.90 304.50L757.03 293.70M769.90 304.50L782.77 293.70M769.90 319.90L758.10 310.00M769.90 319.90L781.70 310.00M769.90 339.70L807.83 317.80M800.38 322.10L803.30 305.56M800.38 322.10L816.17 327.85M787.05 329.80L789.72 314.63M787.05 329.80L801.52 335.07M769.90 339.70L807.83 361.60M800.38 357.30L816.17 351.55M800.38 357.30L803.30 373.84M787.05 349.60L801.52 344.33M787.05 349.60L789.72 364.77M769.90 339.70L769.90 383.50M769.90 374.90L782.77 385.70M769.90 374.90L757.03 385.70M769.90 359.50L781.70 369.40M769.90 359.50L758.10 369.40M769.90 339.70L731.97 361.60M739.42 357.30L736.50 373.84M739.42 357.30L723.63 351.55M752.75 349.60L750.08 364.77M752.75 349.60L738.28 344.33M769.90 339.70L731.97 317.80M739.42 322.10L723.63 327.85M739.42 322.10L736.50 305.56M752.75 329.80L738.28 335.07M752.75 329.80L750.08 314.63" fill="none" stroke="#505050" stroke-width="8.200000000000001" stroke-linecap="round" stroke-linejoin="round"/><path d="M769.90 339.70L769.90 295.90M769.90 304.50L757.03 293.70M769.90 304.50L782.77 293.70M769.90 319.90L758.10 310.00M769.90 319.90L781.70 310.00M769.90 339.70L807.83 317.80M800.38 322.10L803.30 305.56M800.38 322.10L816.17 327.85M787.05 329.80L789.72 314.63M787.05 329.80L801.52 335.07M769.90 339.70L807.83 361.60M800.38 357.30L816.17 351.55M800.38 357.30L803.30 373.84M787.05 349.60L801.52 344.33M787.05 349.60L789.72 364.77M769.90 339.70L769.90 383.50M769.90 374.90L782.77 385.70M769.90 374.90L757.03 385.70M769.90 359.50L781.70 369.40M769.90 359.50L758.10 369.40M769.90 339.70L731.97 361.60M739.42 357.30L736.50 373.84M739.42 357.30L723.63 351.55M752.75 349.60L750.08 364.77M752.75 349.60L738.28 344.33M769.90 339.70L731.97 317.80M739.42 322.10L723.63 327.85M739.42 322.10L736.50 305.56M752.75 329.80L738.28 335.07M752.75 329.80L750.08 314.63" fill="none" stroke="#e9e6d6" stroke-width="6.4" stroke-linecap="round" stroke-linejoin="round"/><path d="M769.90 339.70L769.90 295.90M769.90 304.50L757.03 293.70M769.90 304.50L782.77 293.70M769.90 319.90L758.10 310.00M769.90 319.90L781.70 310.00M769.90 339.70L807.83 317.80M800.38 322.10L803.30 305.56M800.38 322.10L816.17 327.85M787.05 329.80L789.72 314.63M787.05 329.80L801.52 335.07M769.90 339.70L807.83 361.60M800.38 357.30L816.17 351.55M800.38 357.30L803.30 373.84M787.05 349.60L801.52 344.33M787.05 349.60L789.72 364.77M769.90 339.70L769.90 383.50M769.90 374.90L782.77 385.70M769.90 374.90L757.03 385.70M769.90 359.50L781.70 369.40M769.90 359.50L758.10 369.40M769.90 339.70L731.97 361.60M739.42 357.30L736.50 373.84M739.42 357.30L723.63 351.55M752.75 349.60L750.08 364.77M752.75 349.60L738.28 344.33M769.90 339.70L731.97 317.80M739.42 322.10L723.63 327.85M739.42 322.10L736.50 305.56M752.75 329.80L738.28 335.07M752.75 329.80L750.08 314.63" fill="none" stroke="#e9e6d6" stroke-width="9.0" stroke-dasharray="0.5 2" stroke-opacity=".75"/><path d="M835.7 328.4C835.2 328.1 833.7 327.4 833.0 326.7C832.3 326.0 831.7 325.1 831.5 324.2C831.2 323.3 831.2 322.2 831.4 321.2C831.6 320.3 832.2 319.3 832.8 318.6C833.4 318.0 834.4 317.4 835.3 317.1C836.2 316.8 837.3 316.7 838.2 316.9C839.2 317.1 840.2 317.6 840.9 318.3C841.6 318.9 842.2 319.8 842.5 320.7C842.8 321.6 842.9 322.7 842.7 323.7C842.6 324.6 841.8 326.0 841.7 326.5L865.6 341.3L879.1 318.7C878.9 318.4 878.0 317.3 877.6 316.4C877.2 315.5 876.8 314.4 876.8 313.3C876.8 312.3 877.1 311.1 877.6 310.2C878.1 309.4 879.0 308.5 879.9 308.0C880.8 307.5 881.9 307.2 883.0 307.2C884.0 307.2 885.2 307.5 886.1 308.0C886.9 308.5 887.8 309.4 888.3 310.2C888.8 311.1 889.1 312.3 889.1 313.3C889.1 314.4 888.8 315.5 888.3 316.4C887.9 317.3 886.8 318.4 886.4 318.7L899.9 341.3L921.9 325.7C921.7 325.3 920.9 324.2 920.7 323.3C920.5 322.4 920.6 321.2 920.9 320.3C921.2 319.4 921.8 318.5 922.6 317.9C923.3 317.2 924.3 316.7 925.2 316.5C926.1 316.4 927.2 316.4 928.1 316.7C929.0 317.0 930.0 317.6 930.6 318.3C931.3 319.0 931.8 319.9 932.0 320.9C932.2 321.8 932.2 322.9 932.0 323.8C931.7 324.7 931.1 325.6 930.4 326.3C929.8 327.0 928.5 327.7 928.1 328.0L910.9 372.4L853.4 372.4L835.7 328.4Z" fill="none" stroke="#46433c" stroke-width="1.05" stroke-dasharray="2 0.45" stroke-linejoin="round" /><path d="M986.7 323.3C979.9 312.7 985.9 297.7 994.9 289.7C1003.9 297.7 1009.9 312.7 1003.1 323.3L1005.0 324.4C1010.8 313.2 1026.8 310.9 1038.2 314.7C1035.8 326.5 1025.8 339.2 1013.2 338.6L1013.2 340.8C1025.8 340.2 1035.8 352.9 1038.2 364.7C1026.8 368.5 1010.8 366.2 1005.0 355.0L1003.1 356.1C1009.9 366.7 1003.9 381.7 994.9 389.7C985.9 381.7 979.9 366.7 986.7 356.1L984.8 355.0C979.0 366.2 963.0 368.5 951.6 364.7C954.0 352.9 964.0 340.2 976.6 340.8L976.6 338.6C964.0 339.2 954.0 326.5 951.6 314.7C963.0 310.9 979.0 313.2 984.8 324.4Z" fill="none" stroke="#46433c" stroke-width="1.05" stroke-dasharray="2 0.45" stroke-linejoin="round" /><path d="M1107.4 289.8L1119.5 318.4L1152.0 315.8L1132.7 339.6L1152.0 364.1L1119.5 362.2L1106.0 389.8L1093.5 361.2L1061.6 364.1L1080.9 339.6L1061.3 315.3L1094.1 319.3Z" fill="none" stroke="#46433c" stroke-width="1.05" stroke-dasharray="2 0.45" stroke-linejoin="round" /><path d="M657.4 416.7L666.3 442.7L691.7 431.2L681.1 455.3L707.2 465.3L680.2 473.6L692.7 498.3L666.6 486.7L657.4 511.2L647.4 487.1L623.2 498.3L633.3 474.6L606.8 464.9L633.8 454.9L621.3 430.8L647.4 443.7Z" fill="none" stroke="#46433c" stroke-width="1.05" stroke-dasharray="2 0.45" stroke-linejoin="round" /><path d="M758.8 421.6A12.6 12.6 0 0 1 781.4 421.6A12.6 12.6 0 0 1 800.9 432.9A12.6 12.6 0 0 1 812.2 452.4A12.6 12.6 0 0 1 812.2 475.0A12.6 12.6 0 0 1 800.9 494.5A12.6 12.6 0 0 1 781.4 505.8A12.6 12.6 0 0 1 758.8 505.8A12.6 12.6 0 0 1 739.3 494.5A12.6 12.6 0 0 1 728.0 475.0A12.6 12.6 0 0 1 728.0 452.4A12.6 12.6 0 0 1 739.3 432.9A12.6 12.6 0 0 1 758.8 421.6Z" fill="none" stroke="#46433c" stroke-width="1.05" stroke-dasharray="2 0.45" stroke-linejoin="round" /><path d="M883.5 413.9L922.7 463.7L882.2 513.5L841.7 463.7Z" fill="none" stroke="#555" stroke-width=".9"/><path d="M1033.6 477.9L1039.4 498.7C1038.1 498.6 1034.5 499.3 1031.6 498.3C1028.7 497.4 1024.9 495.4 1022.0 492.9C1019.1 490.5 1015.5 485.2 1014.3 483.6C1011.4 483.9 1003.0 485.2 996.9 485.2C990.8 485.2 983.7 484.9 977.6 483.6C971.5 482.4 964.9 480.1 960.2 477.5C955.6 474.8 952.3 471.5 949.6 467.8C947.0 464.1 944.7 459.5 944.4 455.3C944.1 451.1 945.4 446.1 947.7 442.7C950.0 439.4 953.6 437.2 958.3 435.0C963.0 432.8 969.6 430.7 975.7 429.6C981.8 428.5 988.2 428.2 995.0 428.3C1001.7 428.4 1010.1 428.9 1016.2 430.2C1022.3 431.5 1027.5 433.4 1031.6 436.0C1035.8 438.6 1039.1 442.3 1041.3 445.6C1043.5 449.0 1044.6 452.5 1044.8 456.2C1044.9 459.9 1044.1 464.2 1042.2 467.8C1040.4 471.4 1035.0 476.2 1033.6 477.9Z" fill="none" stroke="#46433c" stroke-width="1.05" stroke-dasharray="2 0.45" stroke-linejoin="round" /><path d="M1067.4 449.5A14.6 14.6 0 0 1 1088.7 432.7A16.6 16.6 0 0 1 1120.5 434.1A22.4 22.4 0 0 1 1152.4 464.9A23.6 23.6 0 0 1 1119.5 497.7A25 25 0 0 1 1076.1 485.2A19 19 0 0 1 1067.4 449.5Z" fill="none" stroke="#46433c" stroke-width="1.05" stroke-dasharray="2 0.45" stroke-linejoin="round" /><path d="M606.8 114.5A50.2 50.2 0 0 1 707.2 114.5H684.2A24.7 24.7 0 0 0 634.8 114.5Z" fill="none" stroke="#46433c" stroke-width="1.05" stroke-dasharray="2 0.45" stroke-linejoin="round"/><path d="M770 129.3L741.3 100.4Q724 82 728 66Q733 50 750 52Q764 55 770 68Q776 55 790 52Q807 50 812 66Q816 82 796.8 100.4Z" fill="none" stroke="#46433c" stroke-width="1.05" stroke-dasharray="2 0.45" stroke-linejoin="round"/><rect x="832.6" y="42" width="99.2" height="99.2" rx="25" fill="none" stroke="#46433c" stroke-width="1.05" stroke-dasharray="2 0.45" stroke-linejoin="round"/><path d="M941.2 91.0C942.1 92.5 944.2 97.0 946.2 99.8C948.3 102.5 952.5 106.0 953.8 107.2L951.2 109.8C952.2 110.0 955.5 110.7 957.0 111.5C958.5 112.3 959.5 114.2 960.0 114.8L961.2 120.5C962.5 120.2 966.5 119.8 968.8 119.0C971.0 118.2 974.0 116.5 975.0 116.0C975.3 116.8 976.8 119.3 977.0 121.0C977.2 122.7 977.2 123.5 976.2 126.0C975.3 128.5 972.1 134.3 971.2 136.0C972.6 135.9 977.0 136.0 979.5 135.5C982.0 135.0 985.1 133.4 986.2 133.0L987.5 134.8C988.5 134.3 991.9 133.4 993.8 132.2C995.6 131.1 997.9 128.7 998.8 128.0C999.5 128.5 1001.5 129.7 1003.0 131.0C1004.5 132.3 1006.8 135.2 1007.5 136.0C1007.8 134.8 1008.4 130.8 1009.0 128.5C1009.6 126.2 1010.0 124.1 1011.2 122.2C1012.5 120.4 1015.4 118.1 1016.2 117.2C1018.1 118.6 1023.8 122.6 1027.5 125.5C1031.2 128.4 1036.1 133.4 1038.2 134.8C1040.4 136.1 1040.4 134.1 1040.5 133.5C1040.6 132.9 1040.8 132.9 1039.0 131.0C1037.2 129.1 1033.2 125.0 1030.0 122.2C1026.8 119.5 1022.3 116.4 1020.0 114.8C1017.7 113.1 1016.9 112.7 1016.2 112.2C1017.9 112.5 1023.1 113.8 1026.2 114.0C1029.4 114.2 1033.5 113.6 1035.0 113.5C1034.4 112.6 1032.3 109.9 1031.2 108.0C1030.2 106.1 1029.2 103.2 1028.8 102.2L1032.5 91.0" fill="none" stroke="#46433c" stroke-width="1.05" stroke-dasharray="2 0.45" stroke-linejoin="round"/><path d="M1060 92Q1062 104.8 1080 104.8Q1098 104.8 1100 92M1110 92Q1113 104.3 1131.3 104.3Q1149 104.3 1152 92" fill="none" stroke="#46433c" stroke-width="1.05" stroke-dasharray="2 0.45" stroke-linejoin="round"/><path d="M613.8 575Q609 551 625 548.8Q636 548 640 554.5Q640 540 653.8 538.3Q668 540 669.5 561.3Q674 554.5 682.5 554.5Q698 556 697.5 575" fill="none" stroke="#46433c" stroke-width="1.05" stroke-dasharray="2 0.45" stroke-linejoin="round"/><path d="M720 575A50 50 0 0 1 769.5 538.3V575" fill="none" stroke="#46433c" stroke-width="1.05" stroke-dasharray="2 0.45" stroke-linejoin="round"/><path d="M862 576L882 538.5L902 576" fill="none" stroke="#555" stroke-width=".9"/><path d="M946 574Q948 562 957.5 561.5Q966 560.5 970.5 561.3Q971 541 992.5 540.5Q1012 541 1013.8 558.8Q1020 557.5 1027.5 559.5Q1040 563 1042.5 574" fill="none" stroke="#46433c" stroke-width="1.05" stroke-dasharray="2 0.45" stroke-linejoin="round"/><path d="M1062.6 574Q1060 560 1063 555.5Q1067 547.5 1074 547.5Q1083 547.5 1088.8 556.3Q1107.5 550 1123.8 556.3Q1130 545.5 1140 545.5Q1150 546 1154 555Q1157 561 1155.5 574" fill="none" stroke="#46433c" stroke-width="1.05" stroke-dasharray="2 0.45" stroke-linejoin="round"/><ellipse cx="763.3" cy="351.3" rx="86.6" ry="77" fill="none" stroke="#e41c28" stroke-width="5" transform="rotate(-4 763.3 351.3)"/></svg>
</body></html>
